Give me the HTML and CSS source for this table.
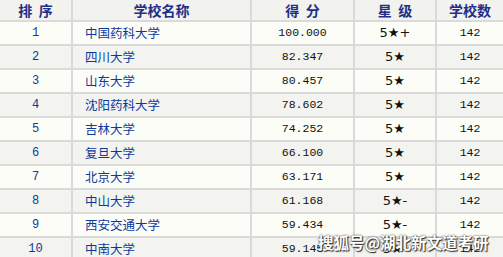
FILE: index.html
```html
<!DOCTYPE html>
<html lang="zh-CN">
<head>
    <meta charset="UTF-8">
    <title>排名</title>
    <link rel="stylesheet" href="styles.css">
</head>
<body>
    <div class="wrap">
        <table class="rank">
            <thead>
                <tr>
                    <th class="c-no">排&nbsp;&nbsp;序</th>
                    <th class="c-name">学校名称</th>
                    <th class="c-score">得&nbsp;&nbsp;分</th>
                    <th class="c-star">星&nbsp;&nbsp;级</th>
                    <th class="c-count">学校数</th>
                </tr>
            </thead>
            <tbody>
                <tr><td class="no">1</td><td class="name">中国药科大学</td><td class="num">100.000</td><td class="star">5★+</td><td class="num">142</td></tr>
                <tr><td class="no">2</td><td class="name">四川大学</td><td class="num">82.347</td><td class="star">5★</td><td class="num">142</td></tr>
                <tr><td class="no">3</td><td class="name">山东大学</td><td class="num">80.457</td><td class="star">5★</td><td class="num">142</td></tr>
                <tr><td class="no">4</td><td class="name">沈阳药科大学</td><td class="num">78.602</td><td class="star">5★</td><td class="num">142</td></tr>
                <tr><td class="no">5</td><td class="name">吉林大学</td><td class="num">74.252</td><td class="star">5★</td><td class="num">142</td></tr>
                <tr><td class="no">6</td><td class="name">复旦大学</td><td class="num">66.100</td><td class="star">5★</td><td class="num">142</td></tr>
                <tr><td class="no">7</td><td class="name">北京大学</td><td class="num">63.171</td><td class="star">5★</td><td class="num">142</td></tr>
                <tr><td class="no">8</td><td class="name">中山大学</td><td class="num">61.168</td><td class="star">5★-</td><td class="num">142</td></tr>
                <tr><td class="no">9</td><td class="name">西安交通大学</td><td class="num">59.434</td><td class="star">5★-</td><td class="num">142</td></tr>
                <tr><td class="no">10</td><td class="name">中南大学</td><td class="num">59.145</td><td class="star">5★-</td><td class="num">142</td></tr>
            </tbody>
        </table>
        <div class="mark">搜狐号@湖北新文道考研</div>
    </div>
</body>
</html>
```

FILE: styles.css
```css
body {
    margin: 0;
    padding: 0;
    background-color: #fdfdf7;
    font-family: "Noto Sans CJK SC", sans-serif;
}
.wrap {
    position: relative;
    width: 503px;
    height: 257px;
    overflow: hidden;
}
.rank {
    width: 503px;
    table-layout: fixed;
    border-collapse: separate;
    border-spacing: 0;
}
.rank th,
.rank td {
    box-sizing: border-box;
    padding: 0;
    border-right: 2px solid #dadada;
    border-bottom: 2px solid #dadada;
    text-align: center;
    white-space: nowrap;
    overflow: hidden;
}
.rank th:last-child,
.rank td:last-child {
    border-right: none;
}
.rank th {
    height: 22px;
    background-color: #f2f2ee;
    color: #1f2f88;
    font-size: 14px;
    font-weight: bold;
    line-height: 18px;
}
.rank td {
    height: 24px;
    line-height: 20px;
    color: #111;
}
.rank tbody tr:nth-child(odd) td {
    background-color: #fdfdf7;
}
.rank tbody tr:nth-child(even) td {
    background-color: #f3f3ef;
}
.c-no { width: 73px; }
.c-name { width: 179px; }
.c-score { width: 103px; }
.c-star { width: 82px; }
.c-count { width: 66px; }

.rank td.no {
    color: #0a3aa0;
    font-family: "Liberation Mono", monospace;
    font-size: 12px;
}
.rank td.name {
    text-align: left;
    padding-left: 12px;
    color: #0a3aa0;
    font-size: 12.5px;
}
.rank td.num {
    font-family: "Liberation Mono", monospace;
    font-size: 11.5px;
}
.rank td.star {
    font-size: 13px;
    font-family: "DejaVu Sans", sans-serif;
}
.mark {
    position: absolute;
    left: 318px;
    top: 231px;
    color: #fff;
    font-size: 15.5px;
    font-weight: bold;
    text-shadow: 0 0 2px #222, 1px 1px 1px #333;
}
```
